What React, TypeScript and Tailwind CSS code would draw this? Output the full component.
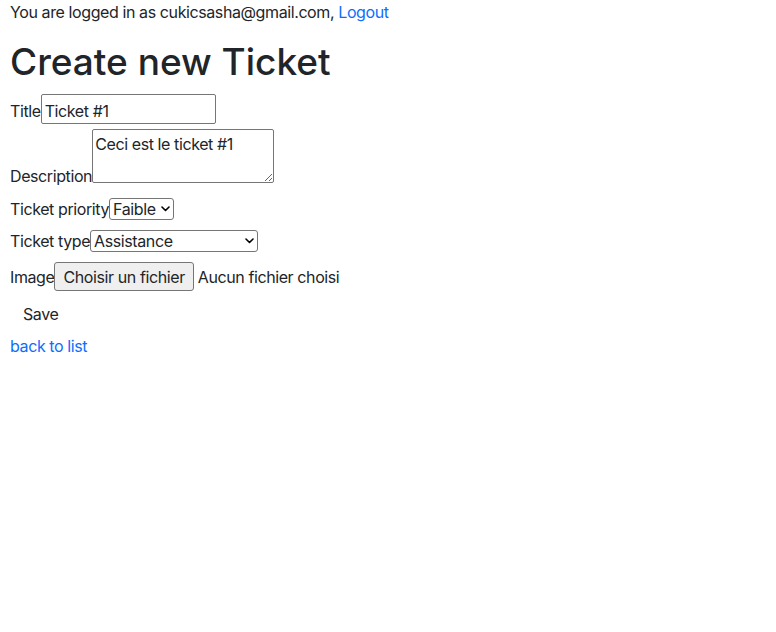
import React from 'react';

const Chevron = () => (
  <svg width="9" height="6" viewBox="0 0 9 6" className="pointer-events-none absolute right-[4px] top-[9px]">
    <path d="M1 1l3.5 3.5L8 1" fill="none" stroke="#000" strokeWidth="1.6" strokeLinecap="round" strokeLinejoin="round" />
  </svg>
);

const App: React.FC = () => {
  return (
    <div className="min-h-[632px] bg-white px-[10px] text-[16px] leading-6 tracking-[-0.4px] text-[#212529] font-['Inter',_'Liberation_Sans',_sans-serif]">
      <p className="h-6">
        You are logged in as cukicsasha@gmail.com, <a href="#" className="text-[#0d6efd]">Logout</a>
      </p>

      <h1 className="mt-[16px] text-[37px] leading-[44px] font-medium tracking-normal">Create new Ticket</h1>

      <form className="flex flex-col">
        <div className="mt-[10px] flex items-baseline">
          <label htmlFor="title">Title</label>
          <input
            id="title"
            type="text"
            defaultValue="Ticket #1"
            className="h-[30px] w-[175px] rounded-[2px] border border-[#767676] px-[3px] pt-[4px] text-[16px] outline-none"
          />
        </div>

        <div className="mt-[5px] flex items-end">
          <label htmlFor="description" className="mb-[-1px] leading-[16px]">Description</label>
          <textarea
            id="description"
            defaultValue="Ceci est le ticket #1"
            className="h-[54px] w-[182px] rounded-[2px] border border-[#767676] px-[2px] pt-[4px] text-[16px] leading-[20px] outline-none"
          />
        </div>

        <div className="mt-[14px] flex items-center">
          <label htmlFor="priority">Ticket priority</label>
          <div className="relative">
            <select
              id="priority"
              defaultValue="faible"
              className="h-[22px] w-[65px] appearance-none rounded-[3px] border border-[#767676] bg-white pl-[3px] text-[16px] leading-5 outline-none"
            >
              <option value="faible">Faible</option>
              <option value="moyenne">Moyenne</option>
              <option value="haute">Haute</option>
            </select>
            <Chevron />
          </div>
        </div>

        <div className="mt-[8px] flex items-center">
          <label htmlFor="type">Ticket type</label>
          <div className="relative">
            <select
              id="type"
              defaultValue="assistance"
              className="h-[22px] w-[168px] appearance-none rounded-[3px] border border-[#767676] bg-white pl-[3px] text-[16px] leading-5 outline-none"
            >
              <option value="assistance">Assistance</option>
              <option value="incident">Incident</option>
              <option value="demande">Demande</option>
            </select>
            <Chevron />
          </div>
        </div>

        <div className="mt-[9px] flex items-center">
          <span>Image</span>
          <button
            type="button"
            className="h-[29px] rounded-[3px] border border-[#767676] bg-[#efefef] px-[8px] text-[16px]"
          >
            Choisir un fichier
          </button>
          <span className="ml-[4px]">Aucun fichier choisi</span>
        </div>

        <div className="mt-[4px]">
          <button type="submit" className="border border-transparent px-3 py-1.5 text-[16px] leading-6">
            Save
          </button>
        </div>
      </form>

      <a href="#" className="mt-[1px] inline-block text-[#0d6efd]">back to list</a>
    </div>
  );
};

export default App;
